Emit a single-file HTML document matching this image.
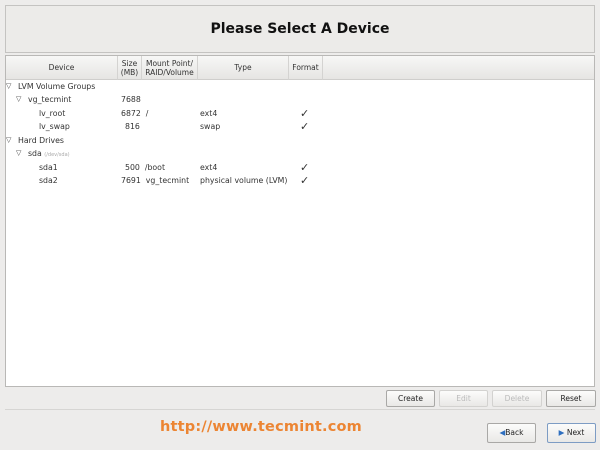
<!DOCTYPE html>
<html><head><style>
body{margin:0;width:600px;height:450px;background:#edeceb;font-family:"DejaVu Sans","Liberation Sans",sans-serif;position:relative;overflow:hidden;color:#222}
.hdr{position:absolute;left:5px;top:5px;width:588px;height:46px;border:1px solid #c4c3c1;background:#ecebe9;text-align:center;line-height:46px;font-weight:bold;font-size:14px;color:#111}
.panel{position:absolute;left:5px;top:55px;width:588px;height:330px;border:1px solid #b9b8b6;background:#fff}
.th{position:absolute;top:0;height:23px;background:linear-gradient(#f7f7f6,#e6e5e3);border-bottom:1px solid #cfcecc;border-right:1px solid #d4d3d1;font-size:7.5px;color:#333;display:flex;align-items:center;justify-content:center;text-align:center;line-height:9px}
.r{position:absolute;font-size:7.8px;color:#333;white-space:nowrap}
.tri{position:absolute;font-size:7px;color:#444;font-weight:bold}
.chk{position:absolute;font-size:11px;color:#333}
.btn{position:absolute;height:15px;border:1px solid #a9a8a6;border-radius:2px;background:linear-gradient(#fcfcfb,#e9e8e6);font-size:7.5px;text-align:center;line-height:15px;color:#222}
.dis{color:#bbb;border-color:#d3d2d0}
</style></head><body>
<div class="hdr">Please Select A Device</div>
<div class="panel">
<div class="th" style="left:0;width:111px">Device</div>
<div class="th" style="left:112px;width:23px">Size<br>(MB)</div>
<div class="th" style="left:136px;width:55px">Mount Point/<br>RAID/Volume</div>
<div class="th" style="left:192px;width:90px">Type</div>
<div class="th" style="left:283px;width:33px">Format</div>
<div class="th" style="left:317px;width:271px;border-right:none"></div>
</div>
<div class="tri" style="left:6px;top:82px">▽</div><div class="r" style="left:18px;top:82px">LVM Volume Groups</div>
<div class="tri" style="left:16px;top:95px">▽</div><div class="r" style="left:28px;top:95px">vg_tecmint</div><div class="r" style="left:121px;top:95px">7688</div>
<div class="r" style="left:39px;top:109px">lv_root</div><div class="r" style="left:121px;top:109px">6872&nbsp; /</div><div class="r" style="left:200px;top:109px">ext4</div><div class="chk" style="left:300px;top:107px">✓</div>
<div class="r" style="left:39px;top:122px">lv_swap</div><div class="r" style="left:125px;top:122px">816</div><div class="r" style="left:200px;top:122px">swap</div><div class="chk" style="left:300px;top:120px">✓</div>
<div class="tri" style="left:6px;top:136px">▽</div><div class="r" style="left:18px;top:136px">Hard Drives</div>
<div class="tri" style="left:16px;top:149px">▽</div><div class="r" style="left:28px;top:149px">sda <span style="font-size:5px;color:#aaa">(/dev/sda)</span></div>
<div class="r" style="left:39px;top:163px">sda1</div><div class="r" style="left:125px;top:163px">500&nbsp; /boot</div><div class="r" style="left:200px;top:163px">ext4</div><div class="chk" style="left:300px;top:161px">✓</div>
<div class="r" style="left:39px;top:176px">sda2</div><div class="r" style="left:121px;top:176px">7691&nbsp; vg_tecmint</div><div class="r" style="left:200px;top:176px">physical volume (LVM)</div><div class="chk" style="left:300px;top:174px">✓</div>
<div class="btn" style="left:386px;top:390px;width:47px">Create</div>
<div class="btn dis" style="left:439px;top:390px;width:47px">Edit</div>
<div class="btn dis" style="left:492px;top:390px;width:48px">Delete</div>
<div class="btn" style="left:546px;top:390px;width:48px">Reset</div>
<div style="position:absolute;left:5px;top:409px;width:590px;border-top:1px solid #d6d5d3"></div>
<div style="position:absolute;left:160px;top:419px;font-family:'DejaVu Sans',sans-serif;font-size:14.5px;font-weight:bold;color:#ec8533;letter-spacing:0.2px">http://www.tecmint.com</div>
<div class="btn" style="left:487px;top:423px;width:47px;height:18px;line-height:18px"><span style="color:#2e6fbf">◀</span>Back</div>
<div class="btn" style="left:547px;top:423px;width:47px;height:18px;line-height:18px;border-color:#7d9cc4"><span style="color:#2e6fbf">▶</span> Next</div>
</body></html>
